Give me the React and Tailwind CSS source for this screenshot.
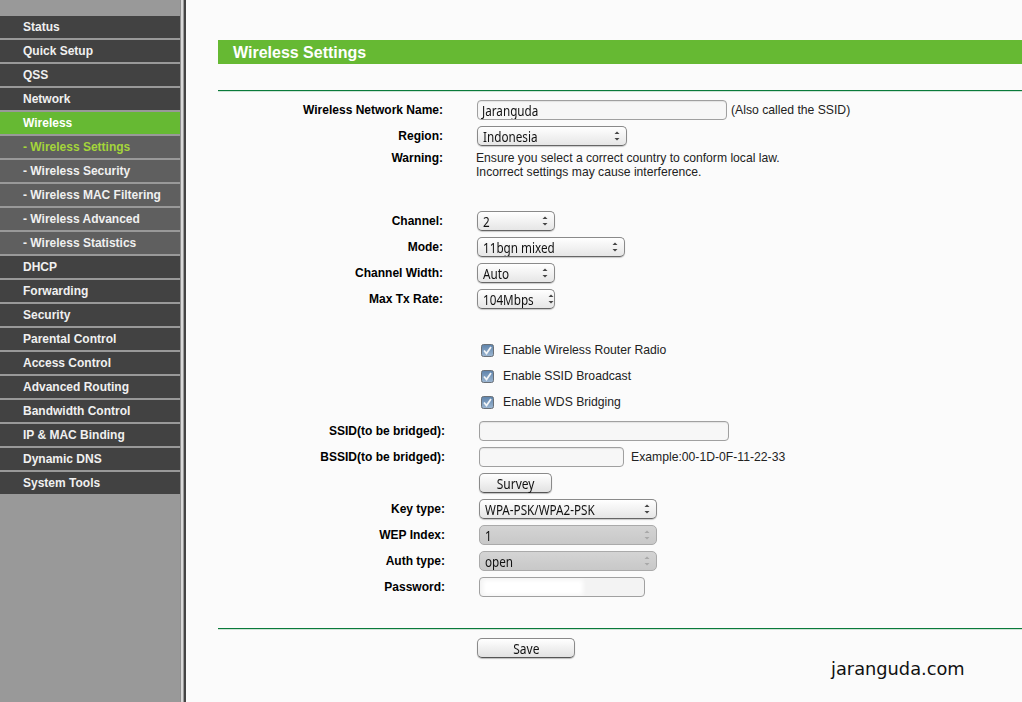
const menu = [
  { label: "Status" },
  { label: "Quick Setup" },
  { label: "QSS" },
  { label: "Network" },
  { label: "Wireless", active: true },
  { label: "- Wireless Settings", sub: true, current: true },
  { label: "- Wireless Security", sub: true },
  { label: "- Wireless MAC Filtering", sub: true },
  { label: "- Wireless Advanced", sub: true },
  { label: "- Wireless Statistics", sub: true },
  { label: "DHCP" },
  { label: "Forwarding" },
  { label: "Security" },
  { label: "Parental Control" },
  { label: "Access Control" },
  { label: "Advanced Routing" },
  { label: "Bandwidth Control" },
  { label: "IP & MAC Binding" },
  { label: "Dynamic DNS" },
  { label: "System Tools" },
];

function Sidebar() {
  return (
    <aside className="w-[186px] shrink-0 flex h-full">
      <nav className="w-[180px] bg-[#999999] pt-[16px] flex flex-col gap-[2px]">
        {menu.map((item) => (
          <div
            key={item.label}
            className={`h-[22px] pl-[23px] flex items-center text-[12px] font-bold ${
              item.active
                ? "bg-[#66b933] text-white"
                : item.sub
                ? item.current
                  ? "bg-[#5f5f5f] text-[#a4d53a]"
                  : "bg-[#5f5f5f] text-[#f0f0f0]"
                : "bg-[#424242] text-[#f0f0f0]"
            }`}
          >
            {item.label}
          </div>
        ))}
      </nav>
      <div className="w-[1px] bg-[#8f8f8f]" />
      <div className="w-[2px] bg-[#d8d8d8]" />
      <div className="w-[1px] bg-[#9a9a9a]" />
      <div className="w-[2px] bg-[#444444]" />
    </aside>
  );
}

// condensed look of the field font
function FieldText({ children }) {
  return (
    <span className="inline-block origin-left scale-x-[0.78] whitespace-nowrap font-['Noto_Sans',sans-serif] text-[15px] leading-[18px] text-[#111]">
      {children}
    </span>
  );
}

function Arrows({ disabled }) {
  const color = disabled ? "#a8a8a8" : "#444444";
  return (
    <svg width="6" height="12" viewBox="0 0 6 12" className="shrink-0">
      <path d="M3 1.5 L5.5 4 H0.5 Z" fill={color} />
      <path d="M3 10.5 L5.5 8 H0.5 Z" fill={color} />
    </svg>
  );
}

function Select({ value, width, disabled }) {
  return (
    <div
      className={`${width} h-[20px] rounded-[5px] border flex items-center justify-between overflow-hidden pl-[5px] pr-[6px] ${
        disabled
          ? "border-[#aaaaaa] bg-gradient-to-b from-[#d4d4d4] to-[#c8c8c8]"
          : "border-[#8a8a8a] border-b-[#666666] bg-gradient-to-b from-white to-[#e6e6e6] shadow-[0_1px_1px_rgba(0,0,0,0.2)]"
      }`}
    >
      <FieldText>{value}</FieldText>
      <Arrows disabled={disabled} />
    </div>
  );
}

function TextBox({ width, value }) {
  return (
    <div
      className={`${width} h-[20px] rounded-[4px] border border-[#a0a0a0] bg-[#f7f7f7] shadow-[inset_0_1px_1px_rgba(0,0,0,0.08)] px-[4px] flex items-center overflow-hidden`}
    >
      {value && <FieldText>{value}</FieldText>}
    </div>
  );
}

function Button({ width, children }) {
  return (
    <button
      className={`${width} h-[20px] rounded-[5px] border border-[#8a8a8a] border-b-[#555555] bg-gradient-to-b from-white to-[#e2e2e2] shadow-[0_1px_1px_rgba(0,0,0,0.25)] flex items-center justify-center`}
    >
      <span className="inline-block scale-x-[0.8] whitespace-nowrap font-['Noto_Sans',sans-serif] text-[15px] leading-[18px] text-[#111]">
        {children}
      </span>
    </button>
  );
}

function Row({ label, labelWidth = "w-[225px]", gap = "ml-[34px]", children }) {
  return (
    <div className="flex items-center h-[26px]">
      <div className={`${labelWidth} text-right text-[12px] font-bold text-black -mt-[1px]`}>{label}</div>
      <div className={`${gap} flex items-center`}>{children}</div>
    </div>
  );
}

function Check({ label }) {
  return (
    <div className="h-[26px] flex items-center pl-[263px]">
      <svg width="13" height="13" viewBox="0 0 13 13" className="shrink-0">
        <defs>
          <linearGradient id="box" x1="0" y1="0" x2="0" y2="1">
            <stop offset="0" stopColor="#5d82aa" />
            <stop offset="1" stopColor="#9db7d2" />
          </linearGradient>
        </defs>
        <rect x="0.5" y="0.5" width="12" height="12" rx="2" fill="url(#box)" stroke="#6a7077" />
        <path d="M3 6.5 L5.5 9.5 L10 3" fill="none" stroke="#f2f5f8" strokeWidth="1.8" />
      </svg>
      <span className="ml-[9px] text-[12.2px] text-[#222]">{label}</span>
    </div>
  );
}

function Divider() {
  return <div className="h-[2px] border-t border-[#0a7a3a] bg-[#cfe3d6]" />;
}

export default function App() {
  return (
    <div className="w-[1022px] h-[702px] overflow-hidden flex bg-[#fbfbfb] font-['Liberation_Sans',sans-serif] relative">
      <Sidebar />
      <main className="flex-1 pl-[32px] pt-[40px]">
        <div className="h-[24px] bg-[#66b933] pl-[15px] pt-[2px] mb-[26px] flex items-center text-white font-bold text-[16px]">
          Wireless Settings
        </div>
        <Divider />

        <div className="mt-[5px]">
          <Row label="Wireless Network Name:">
            <TextBox width="w-[250px]" value="Jaranguda" />
            <span className="ml-[4px] text-[12.2px] text-[#222]">(Also called the SSID)</span>
          </Row>
          <div className="flex items-center h-[20px] mt-[3px]">
            <div className="w-[225px] text-right text-[12px] font-bold text-black">Region:</div>
            <div className="ml-[34px]">
              <Select value="Indonesia" width="w-[150px]" />
            </div>
          </div>
          <div className="flex mt-[5px] h-[57px]">
            <div className="w-[225px] text-right text-[12px] leading-[14px] font-bold text-black">Warning:</div>
            <div className="ml-[33px] text-[12.15px] leading-[14px] text-[#222]">
              Ensure you select a correct country to conform local law.
              <br />
              Incorrect settings may cause interference.
            </div>
          </div>
          <Row label="Channel:">
            <Select value="2" width="w-[78px]" />
          </Row>
          <Row label="Mode:">
            <Select value="11bgn mixed" width="w-[148px]" />
          </Row>
          <Row label="Channel Width:">
            <Select value="Auto" width="w-[78px]" />
          </Row>
          <Row label="Max Tx Rate:">
            <Select value="104Mbps" width="w-[78px]" />
          </Row>
        </div>

        <div className="mt-[25px]">
          <Check label="Enable Wireless Router Radio" />
          <Check label="Enable SSID Broadcast" />
          <Check label="Enable WDS Bridging" />
        </div>

        <div className="mt-[3px]">
          <Row label="SSID(to be bridged):" labelWidth="w-[227px]">
            <TextBox width="w-[250px]" />
          </Row>
          <Row label="BSSID(to be bridged):" labelWidth="w-[227px]">
            <TextBox width="w-[145px]" />
            <span className="ml-[7px] text-[12.2px] text-[#222]">Example:00-1D-0F-11-22-33</span>
          </Row>
          <Row label="" labelWidth="w-[227px]">
            <Button width="w-[73px]">Survey</Button>
          </Row>
          <Row label="Key type:" labelWidth="w-[227px]">
            <Select value="WPA-PSK/WPA2-PSK" width="w-[178px]" />
          </Row>
          <Row label="WEP Index:" labelWidth="w-[227px]">
            <Select value="1" width="w-[178px]" disabled />
          </Row>
          <Row label="Auth type:" labelWidth="w-[227px]">
            <Select value="open" width="w-[178px]" disabled />
          </Row>
          <Row label="Password:" labelWidth="w-[227px]">
            <div className="relative w-[166px] h-[20px] rounded-[4px] border border-[#a0a0a0] bg-[#f3f3f3] overflow-hidden">
              <div className="absolute left-[3px] top-[2px] w-[100px] h-[15px] bg-white blur-[2px]" />
            </div>
          </Row>
        </div>

        <div className="mt-[28px]">
          <Divider />
        </div>
        <div className="mt-[8px] pl-[259px]">
          <Button width="w-[98px]">Save</Button>
        </div>
      </main>
      <div className="absolute left-[831px] top-[656px] font-['DejaVu_Sans',sans-serif] text-[17.8px] text-[#111]">
        jaranguda.com
      </div>
    </div>
  );
}
